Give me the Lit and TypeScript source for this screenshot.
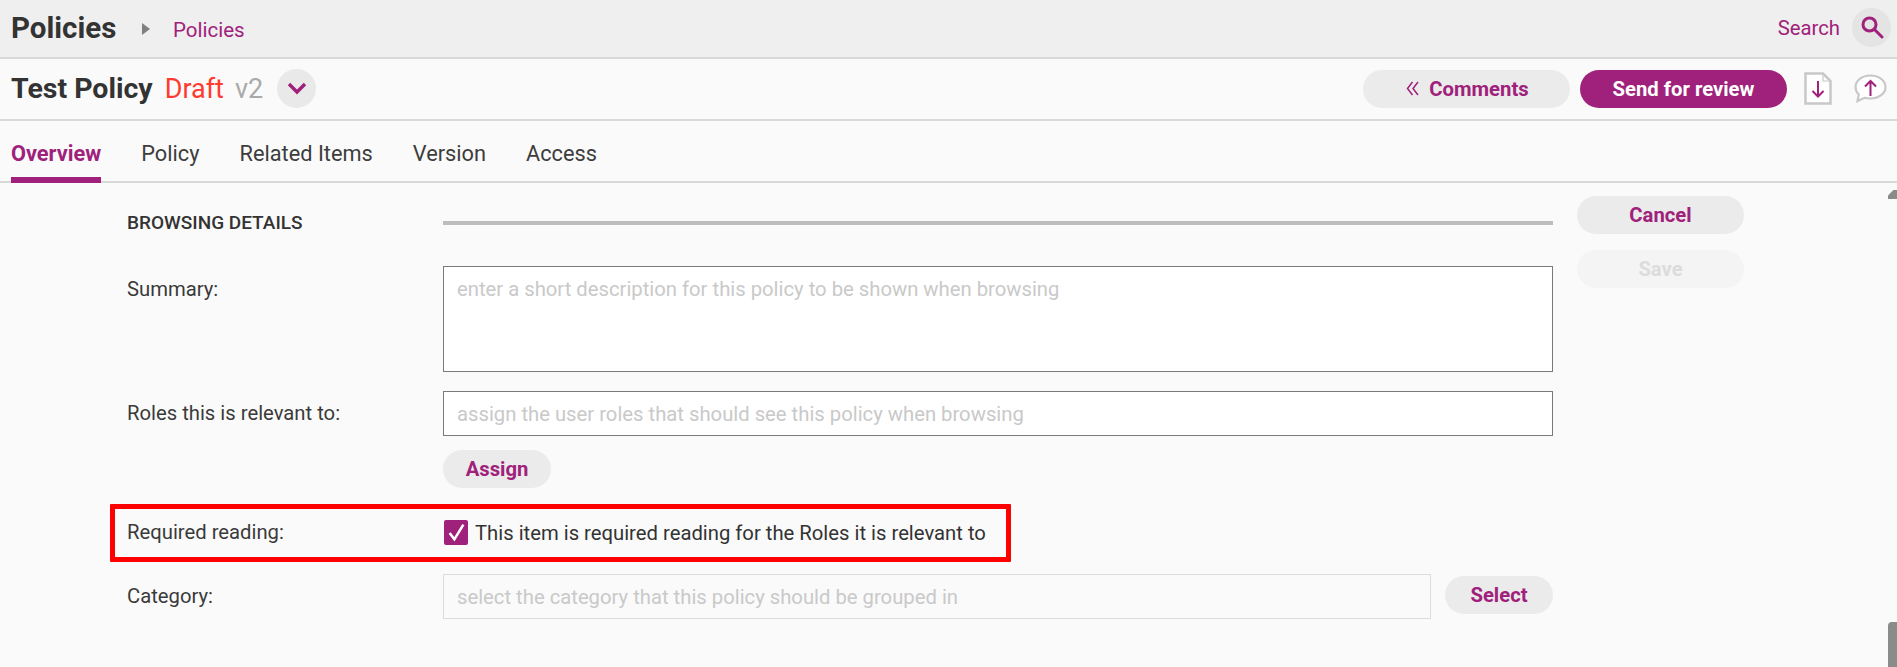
import { LitElement, html, css } from "lit";
import { customElement } from "lit/decorators.js";

@customElement("app-root")
export class AppRoot extends LitElement {
  static styles = css`
    :host { display: block; width: 1897px; height: 667px; overflow: hidden; position: relative; background: #fafafa; font-family: Roboto, sans-serif; color: #333; font-size: 20.25px; }
    * { box-sizing: border-box; }
    .top { height: 59px; background: #efefef; border-bottom: 2px solid #d8d8d8; display: flex; align-items: center; padding: 0 6px 3px 11px; }
    .top h1 { margin: 0; font-size: 29.5px; font-weight: 700; color: #333; width: 131px; padding-top: 1px; }
    .crumb-arrow { width: 0; height: 0; border-left: 8px solid #808080; border-top: 6px solid transparent; border-bottom: 6px solid transparent; margin-right: 23px; margin-top: 3px; }
    .crumb { color: #a0217b; font-size: 20.5px; margin-top: 5px; }
    .spacer { flex: 1; }
    .search { color: #a0217b; font-size: 20.3px; margin-right: 12px; padding-top: 1px; }
    .round { width: 39px; height: 39px; border-radius: 50%; background: #e4e4e4; display: flex; align-items: center; justify-content: center; }
    .title { height: 62px; border-bottom: 2px solid #d8d8d8; display: flex; align-items: center; padding: 0 10px 1px 11px; }
    .title b { font-size: 28.5px; font-weight: 700; }
    .draft { font-size: 27px; color: #ff3a2f; margin-left: 12px; }
    .ver { font-size: 27px; color: #aaa; margin-left: 11px; }
    .caret { width: 39px; height: 39px; border-radius: 50%; background: #e9e9e9; margin-left: 14px; display: flex; align-items: center; justify-content: center; }
    .pill { border: 0; border-radius: 19px; background: #ebebeb; color: #a0217b; font: 700 20.25px Roboto, sans-serif; height: 38px; display: flex; align-items: center; justify-content: center; padding: 0; }
    .comments { width: 207px; gap: 10px; padding-left: 2px; }
    .send { width: 207px; background: #a0217b; color: #fff; margin-left: 10px; }
    .doc { margin-left: 17px; }
    .bubble { margin-left: 22px; }
    .tabs { height: 62px; border-bottom: 2px solid #d8d8d8; display: flex; gap: 40px; padding: 0 0 0 11px; align-items: stretch; font-size: 21.75px; }
    .tab { display: flex; align-items: center; padding-top: 3px; color: #3d3d3d; height: 62px; }
    .tab.on { color: #a0217b; font-weight: 700; border-bottom: 6px solid #a0217b; padding-top: 9px; }
    .body { display: flex; padding: 13px 0 0 127px; position: relative; }
    .form { width: 1426px; display: grid; grid-template-columns: 316px 1fr; align-items: start; position: relative; }
    .sec { font-size: 19px; font-weight: 500; height: 30px; padding-top: 15px; line-height: 23px; white-space: nowrap; }
    .rule { height: 4px; background: #bdbdbd; margin-top: 25px; margin-bottom: 41px; }
    .lbl { color: #3a3a3a; }
    .box { background: #fff; border: 1px solid #7a7a7a; color: #c9c9c9; padding: 11px 13px 0; line-height: 22px; }
    .ta { height: 106px; margin-bottom: 19px; }
    .inp { height: 45px; margin-bottom: 14px; }
    .l1 { padding-top: 12px; line-height: 22px; }
    .l2 { padding-top: 11px; line-height: 22px; }
    .l3 { padding-top: 10px; line-height: 22px; }
    .assign { width: 108px; margin-bottom: 32px; }
    .req-l { line-height: 25px; height: 25px; }
    .req { display: flex; align-items: center; gap: 7px; height: 25px; margin-bottom: 30px; padding-left: 1px; color: #333; }
    .cb { width: 24px; height: 25px; background: #a0217b; border-radius: 2px; display: flex; align-items: center; justify-content: center; }
    .red { position: absolute; left: -17px; top: 308px; width: 901px; height: 58px; border: 5px solid #ff0000; pointer-events: none; border-radius: 1px; }
    .cat-row { display: flex; gap: 14px; align-items: flex-start; margin-top: -1px; }
    .cat { flex: 0 0 988px; height: 45px; background: #fafafa; border: 1px solid #dcdcdc; padding: 11px 13px 0; color: #c9c9c9; line-height: 22px; }
    .select { width: 108px; margin-top: 2px; }
    .side { margin-left: 24px; width: 167px; display: flex; flex-direction: column; gap: 16px; }
    .save { background: #f4f4f4; color: #dcdcdc; }
    .sb { position: absolute; right: 0; width: 9px; background: #8b8b8b; }
    .sb-up { top: 190px; width: 9px; height: 9px; clip-path: polygon(100% 0, 100% 100%, 0 100%, 0 60%, 60% 0); }
    .sb-th { top: 622px; height: 45px; border-radius: 4px 0 0 0; }
  `;

  render() {
    return html`
      <div class="top">
        <h1>Policies</h1>
        <span class="crumb-arrow"></span>
        <span class="crumb">Policies</span>
        <span class="spacer"></span>
        <span class="search">Search</span>
        <span class="round">
          <svg width="24" height="24" viewBox="0 0 24 24" fill="none" stroke="#a0217b" stroke-width="3"><circle cx="9.5" cy="9.5" r="6.5"/><path d="M14.5 14.5 22 22" stroke-linecap="round"/></svg>
        </span>
      </div>
      <div class="title">
        <b>Test Policy</b><span class="draft">Draft</span><span class="ver">v2</span>
        <span class="caret">
          <svg width="20" height="13" viewBox="0 0 20 13" fill="none" stroke="#a0217b" stroke-width="3.4"><path d="M2 2 10 10 18 2"/></svg>
        </span>
        <span class="spacer"></span>
        <button class="pill comments">
          <svg width="13" height="15" viewBox="0 0 13 15" fill="none" stroke="#a0217b" stroke-width="1.5"><path d="M6.500 1 1.500 7.500 6.500 14M12 1 7 7.500 12 14"/></svg>
          Comments
        </button>
        <button class="pill send">Send for review</button>
        <svg class="doc" width="28" height="33" viewBox="0 0 28 33" fill="none"><path d="M1.500 1.500H19L26.500 9V31.500H1.500Z" fill="#fff" stroke="#c8c8c8" stroke-width="2.500"/><path d="M19 1.500V9H26.500" stroke="#c8c8c8" stroke-width="1.200"/><path d="M14 9V24.500M8.500 19 14 24.500 19.500 19" stroke="#a0217b" stroke-width="2"/></svg>
        <svg class="bubble" width="33" height="29" viewBox="0 0 33 29" fill="none"><path d="M16.500 1.500C8 1.500 1.500 6.500 1.500 13c0 3 1.200 5.500 3.300 7.500L3.500 27l7-3.200c1.800.5 3.900.7 6 .7 8.500 0 15-5 15-11.500S25 1.500 16.500 1.500Z" fill="#fff" stroke="#c8c8c8" stroke-width="2.200"/><path d="M16.500 22V7M11 12.500 16.500 7l5.500 5.500" stroke="#a0217b" stroke-width="2"/></svg>
      </div>
      <div class="tabs">
        <span class="tab on">Overview</span>
        <span class="tab">Policy</span>
        <span class="tab">Related Items</span>
        <span class="tab">Version</span>
        <span class="tab">Access</span>
      </div>
      <div class="body">
        <div class="form">
          <div class="sec">BROWSING DETAILS</div>
          <div class="rule"></div>
          <div class="lbl l1">Summary:</div>
          <div class="box ta">enter a short description for this policy to be shown when browsing</div>
          <div class="lbl l2">Roles this is relevant to:</div>
          <div class="box inp">assign the user roles that should see this policy when browsing</div>
          <div></div>
          <button class="pill assign">Assign</button>
          <div class="lbl req-l">Required reading:</div>
          <div class="req">
            <span class="cb"><svg width="19" height="19" viewBox="0 0 18 18" fill="none" stroke="#fff" stroke-width="2.400"><path d="M2.500 9.500 7 15.500 15.500 1.500"/></svg></span>
            This item is required reading for the Roles it is relevant to
          </div>
          <div class="lbl l3">Category:</div>
          <div class="cat-row">
            <div class="cat">select the category that this policy should be grouped in</div>
            <button class="pill select">Select</button>
          </div>
          <div class="red"></div>
        </div>
        <div class="side">
          <button class="pill">Cancel</button>
          <button class="pill save">Save</button>
        </div>
      </div>
      <div class="sb sb-up"></div>
      <div class="sb sb-th"></div>
    `;
  }
}
